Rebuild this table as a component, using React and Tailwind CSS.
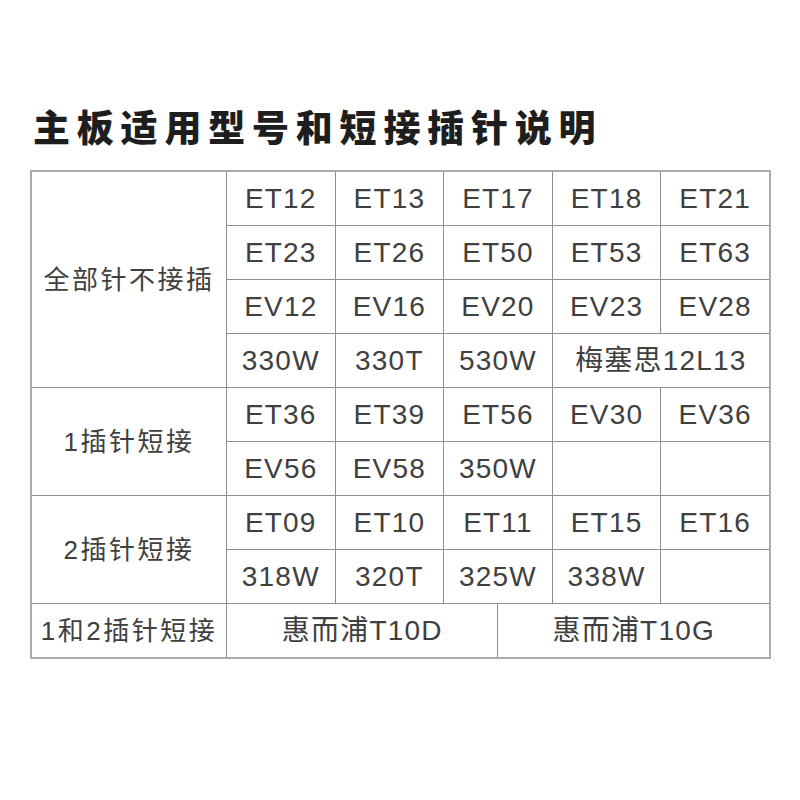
import React from "react";

const FONT = { fontFamily: '"Liberation Sans", "Noto Sans CJK SC", sans-serif' };

function Cell({ children, className = "" }) {
  return (
    <div
      className={
        "bg-white flex items-center justify-center text-[28px] leading-none tracking-[1.2px] text-[#404040] " +
        className
      }
    >
      {children}
    </div>
  );
}

function Label({ children, className = "" }) {
  return (
    <div
      className={
        "bg-white flex items-center justify-center text-[26px] leading-none tracking-[2.5px] text-[#404040] col-start-1 " +
        className
      }
    >
      {children}
    </div>
  );
}

export default function App() {
  return (
    <div className="w-[800px] h-[800px] bg-white pt-[107px]" style={FONT}>
      <h1
        className="ml-[33px] h-[38px] text-[37px] leading-[38px] font-black tracking-[6.8px] text-[#1e1e1e]"
        style={{ fontFamily: '"Noto Sans CJK SC", sans-serif' }}
      >
        主板适用型号和短接插针说明
      </h1>
      <div className="ml-[30px] mt-[25px] w-[741px] border-2 border-[#ababab]">
        <div className="grid grid-cols-[194px_repeat(10,1fr)] grid-rows-[repeat(9,53px)] gap-px bg-[#8e8e8e]">
          <Label className="row-start-1 row-span-4">全部针不接插</Label>
          <Cell className="col-span-2">ET12</Cell>
          <Cell className="col-span-2">ET13</Cell>
          <Cell className="col-span-2">ET17</Cell>
          <Cell className="col-span-2">ET18</Cell>
          <Cell className="col-span-2">ET21</Cell>

          <Cell className="col-span-2">ET23</Cell>
          <Cell className="col-span-2">ET26</Cell>
          <Cell className="col-span-2">ET50</Cell>
          <Cell className="col-span-2">ET53</Cell>
          <Cell className="col-span-2">ET63</Cell>

          <Cell className="col-span-2">EV12</Cell>
          <Cell className="col-span-2">EV16</Cell>
          <Cell className="col-span-2">EV20</Cell>
          <Cell className="col-span-2">EV23</Cell>
          <Cell className="col-span-2">EV28</Cell>

          <Cell className="col-span-2">330W</Cell>
          <Cell className="col-span-2">330T</Cell>
          <Cell className="col-span-2">530W</Cell>
          <Cell className="col-span-4">梅塞思12L13</Cell>

          <Label className="row-start-5 row-span-2">1插针短接</Label>
          <Cell className="col-span-2">ET36</Cell>
          <Cell className="col-span-2">ET39</Cell>
          <Cell className="col-span-2">ET56</Cell>
          <Cell className="col-span-2">EV30</Cell>
          <Cell className="col-span-2">EV36</Cell>

          <Cell className="col-span-2">EV56</Cell>
          <Cell className="col-span-2">EV58</Cell>
          <Cell className="col-span-2">350W</Cell>
          <Cell className="col-span-2"></Cell>
          <Cell className="col-span-2"></Cell>

          <Label className="row-start-7 row-span-2">2插针短接</Label>
          <Cell className="col-span-2">ET09</Cell>
          <Cell className="col-span-2">ET10</Cell>
          <Cell className="col-span-2">ET11</Cell>
          <Cell className="col-span-2">ET15</Cell>
          <Cell className="col-span-2">ET16</Cell>

          <Cell className="col-span-2">318W</Cell>
          <Cell className="col-span-2">320T</Cell>
          <Cell className="col-span-2">325W</Cell>
          <Cell className="col-span-2">338W</Cell>
          <Cell className="col-span-2"></Cell>

          <Label className="row-start-9">1和2插针短接</Label>
          <Cell className="col-span-5">惠而浦T10D</Cell>
          <Cell className="col-span-5">惠而浦T10G</Cell>
        </div>
      </div>
    </div>
  );
}
